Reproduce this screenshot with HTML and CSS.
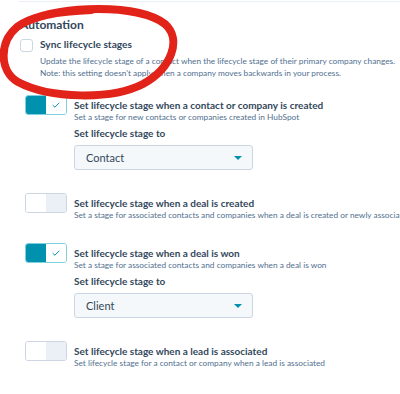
FILE: index.html
```html
<!DOCTYPE html>
<html lang="en">

<head>
  <meta charset="UTF-8">
  <meta name="viewport" content="width=device-width, initial-scale=1.0">
  <title>Lifecycle stage automation</title>
  <link rel="stylesheet" href="styles.css">
</head>

<body>
  <section class="panel">
    <h2 class="panel-title">Automation</h2>

    <div class="sync">
      <span class="checkbox"></span>
      <div class="sync-body">
        <div class="sync-label">Sync lifecycle stages</div>
        <p class="help">Update the lifecycle stage of a contact when the lifecycle stage of their primary company changes.<br>Note: this setting doesn't apply when a company moves backwards in your process.</p>
      </div>
    </div>

    <ul class="rules">
      <li class="rule">
        <span class="toggle on">
          <span class="toggle-knob"></span>
          <span class="toggle-mark">
            <svg width="8" height="6" viewBox="0 0 8 6"><path d="M0.7 3.2 L2.9 5.2 L7.3 0.8" fill="none" stroke="#0091ae" stroke-width="1"/></svg>
          </span>
        </span>
        <div class="rule-body">
          <div class="rule-title">Set lifecycle stage when a contact or company is created</div>
          <div class="rule-desc">Set a stage for new contacts or companies created in HubSpot</div>
          <label class="field-label">Set lifecycle stage to</label>
          <div class="select">Contact<span class="caret"></span></div>
        </div>
      </li>

      <li class="rule">
        <span class="toggle">
          <span class="toggle-knob"></span>
          <span class="toggle-mark"></span>
        </span>
        <div class="rule-body">
          <div class="rule-title">Set lifecycle stage when a deal is created</div>
          <div class="rule-desc">Set a stage for associated contacts and companies when a deal is created or newly associated</div>
        </div>
      </li>

      <li class="rule">
        <span class="toggle on">
          <span class="toggle-knob"></span>
          <span class="toggle-mark">
            <svg width="8" height="6" viewBox="0 0 8 6"><path d="M0.7 3.2 L2.9 5.2 L7.3 0.8" fill="none" stroke="#0091ae" stroke-width="1"/></svg>
          </span>
        </span>
        <div class="rule-body">
          <div class="rule-title">Set lifecycle stage when a deal is won</div>
          <div class="rule-desc">Set a stage for associated contacts and companies when a deal is won</div>
          <label class="field-label">Set lifecycle stage to</label>
          <div class="select">Client<span class="caret"></span></div>
        </div>
      </li>

      <li class="rule">
        <span class="toggle">
          <span class="toggle-knob"></span>
          <span class="toggle-mark"></span>
        </span>
        <div class="rule-body">
          <div class="rule-title">Set lifecycle stage when a lead is associated</div>
          <div class="rule-desc">Set lifecycle stage for a contact or company when a lead is associated</div>
        </div>
      </li>
    </ul>
  </section>

  <!-- red pen circle drawn over the screenshot -->
  <svg class="scribble" width="400" height="120" viewBox="0 0 400 120">
    <path d="M28 21 C60 6, 138 3, 165 24 C182 39, 172 68, 143 84 C112 100, 50 99, 18 82 C-1 71, -1 42, 17 27 C33 15, 62 11, 92 10" fill="none" stroke="#e2231a" stroke-width="8" stroke-linecap="round"/>
  </svg>
</body>

</html>
```

FILE: styles.css
```css
body {
  margin: 0;
  background: #fff;
  font-family: Lato, "Noto Sans", sans-serif;
  color: #33475b;
  overflow: hidden;
  position: relative;
}

.panel {
  margin: 1px 0 0 19px;
  border-top: 1px solid #eaf0f6;
  padding-top: 15px;
  white-space: nowrap;
}

.panel-title {
  margin: 0 0 0 1px;
  font-size: 12px;
  font-weight: 700;
  line-height: 16px;
}

.sync {
  display: flex;
  gap: 7px;
  margin: 5px 0 0 1px;
}

.checkbox {
  width: 11px;
  height: 11px;
  margin-top: 1px;
  border: 1px solid #cbd6e2;
  border-radius: 3px;
  background: #fff;
  flex-shrink: 0;
}

.sync-label {
  font-size: 10.2px;
  font-weight: 700;
  line-height: 13px;
}

.help {
  margin: 4px 0 0;
  font-size: 8.3px;
  line-height: 12px;
  color: #516f90;
}

.rules {
  list-style: none;
  margin: 16px 0 0 6px;
  padding: 0;
  display: flex;
  flex-direction: column;
  gap: 23px;
}

.rule {
  display: flex;
  gap: 7px;
}

.toggle {
  display: flex;
  width: 42px;
  height: 20px;
  box-sizing: border-box;
  border: 1px solid #cbd6e2;
  border-radius: 3px;
  overflow: hidden;
  flex-shrink: 0;
}

.toggle-knob {
  flex: 1;
  background: #fff;
}

.toggle-mark {
  flex: 1;
  background: #eaf0f6;
  display: flex;
  align-items: center;
  justify-content: center;
}

.toggle.on {
  border-color: #7fd1de;
}

.toggle.on .toggle-knob {
  background: #0091ae;
}

.toggle.on .toggle-mark {
  background: #fff;
}

.rule-body {
  padding-top: 3px;
  min-width: 0;
}

.rule-title {
  font-size: 10px;
  font-weight: 700;
  line-height: 14px;
}

.rule-desc {
  font-size: 8.3px;
  line-height: 10px;
  color: #516f90;
}

.field-label {
  display: block;
  margin-top: 5px;
  font-size: 10px;
  font-weight: 700;
  line-height: 13px;
}

.select {
  display: flex;
  align-items: center;
  justify-content: space-between;
  width: 179px;
  height: 25px;
  margin-top: 5px;
  padding: 0 10px 0 11px;
  box-sizing: border-box;
  background: #f5f8fa;
  border: 1px solid #cbd6e2;
  border-radius: 3px;
  font-size: 11px;
}

.caret {
  width: 0;
  height: 0;
  border-left: 4px solid transparent;
  border-right: 4px solid transparent;
  border-top: 4px solid #0091ae;
}

.scribble {
  position: absolute;
  top: 0;
  left: 0;
  pointer-events: none;
}
```
